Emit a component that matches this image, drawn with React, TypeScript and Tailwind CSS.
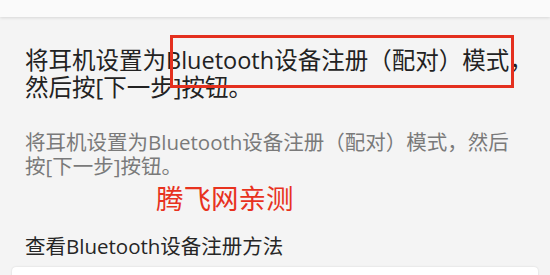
import React from 'react';

// Latin glyphs come from Open Sans, CJK falls through to Noto Sans CJK
const font = { fontFamily: '"Open Sans", "Noto Sans CJK SC", sans-serif' };

// Red annotation box drawn over the highlighted phrase
function Highlight({ children }: { children: React.ReactNode }) {
  return (
    <span className="relative">
      {children}
      <span className="pointer-events-none absolute left-[4px] -right-[5px] -top-[9px] -bottom-[12px] border-[3px] border-[#e4301f]" />
    </span>
  );
}

export default function App() {
  return (
    <div className="h-[275px] w-[550px] overflow-hidden bg-[#f4f4f4]" style={font}>
      <div className="h-[17px] bg-[#fafafa] shadow-[0_1px_3px_rgba(0,0,0,0.12)]" />

      <div className="pl-[25px] pr-[10px]">
        <p className="mt-[30px] text-[23.5px] leading-[27px] text-[#222]">
          将耳机设置为<Highlight>Bluetooth设备注册（配对）模式</Highlight>，然后按[下一步]按钮。
        </p>

        <p className="mt-[29px] pr-[20px] text-[20.5px] leading-[24px] text-[#7a7a7a]">
          将耳机设置为Bluetooth设备注册（配对）模式，然后按[下一步]按钮。
        </p>

        <p className="ml-[131px] mt-[5px] text-[27.5px] leading-[32px] text-[#e8321e]">腾飞网亲测</p>

        <p className="mt-[18px] text-[20.5px] leading-[26px] text-[#262626]">查看Bluetooth设备注册方法</p>
      </div>

      <div className="mx-[12px] mt-[8px] h-[40px] rounded-sm bg-white shadow-[0_0_2px_rgba(0,0,0,0.15)]" />
    </div>
  );
}
